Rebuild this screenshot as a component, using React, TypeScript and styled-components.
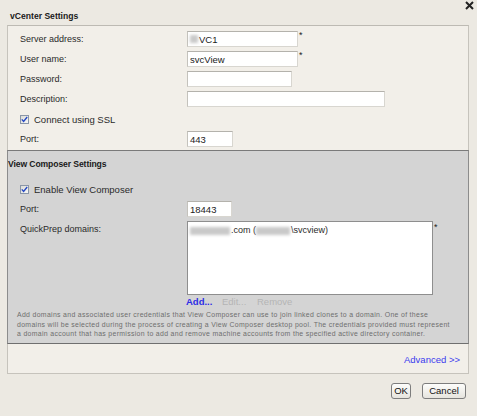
import styled, { createGlobalStyle } from "styled-components";

const GlobalStyle = createGlobalStyle`
  html, body {
    margin: 0;
    padding: 0;
    background: #ece9e2;
  }
  body {
    font-family: "Liberation Sans", Arial, sans-serif;
    font-size: 9px;
    color: #2a2a2a;
  }
`;

const Dialog = styled.div`
  width: 477px;
  height: 416px;
  display: flex;
  flex-direction: column;
  background: #ece9e2;
`;

const Header = styled.div`
  height: 25px;
  display: flex;
  justify-content: space-between;
  align-items: flex-start;
`;

const Title = styled.div`
  font-weight: bold;
  font-size: 8.6px;
  padding: 11px 0 0 10px;
  line-height: 10px;
  color: #1a1a1a;
`;

const Close = styled.div`
  width: 10px;
  height: 10px;
  margin: 1px 2px 0 0;
  display: flex;
`;

const Panel = styled.div`
  margin: 0 8px 0 7px;
  border: 1px solid #c6c3bc;
  border-top-color: #bdbab3;
  background: #f2efe9;
  display: flex;
  flex-direction: column;
`;

const Fields = styled.div`
  padding: 3px 0 1px 12px;
  display: flex;
  flex-direction: column;
`;

const Row = styled.div<{ $h?: number; $top?: boolean }>`
  display: flex;
  align-items: ${(p) => (p.$top ? "flex-start" : "center")};
  height: ${(p) => p.$h ?? 20}px;
`;

const Label = styled.div<{ $top?: boolean }>`
  width: 167px;
  flex: none;
  line-height: 12px;
  padding-top: ${(p) => (p.$top ? 4 : 0)}px;
`;

const Input = styled.div<{ $w: number }>`
  width: ${(p) => p.$w}px;
  height: 16px;
  box-sizing: border-box;
  background: #fff;
  border: 1px solid #d8d6d0;
  border-top-color: #b4b2ac;
  border-left-color: #c4c2bc;
  display: flex;
  align-items: center;
  padding-left: 2px;
  font-size: 9.5px;
  color: #222;
`;

const Req = styled.span<{ $top?: number }>`
  align-self: flex-start;
  font-size: 9px;
  line-height: 9px;
  margin: ${(p) => p.$top ?? 2}px 0 0 1px;
  color: #222;
`;

const Blur = styled.span<{ $w: number }>`
  display: inline-block;
  width: ${(p) => p.$w}px;
  height: 8px;
  background: #c9c9c9;
  filter: blur(1.4px);
  margin-right: 1px;
`;

const CheckRow = styled.div`
  display: flex;
  align-items: center;
  height: 20px;
  gap: 5px;
  font-size: 9.5px;
`;

const Box = styled.span`
  width: 9px;
  height: 9px;
  box-sizing: border-box;
  border: 1px solid #8a96a8;
  background: linear-gradient(135deg, #dcdcd6, #f8f8f6);
  display: flex;
  align-items: center;
  justify-content: center;
`;

const Gray = styled.div`
  margin: 0 -1px;
  background: #d4d4d4;
  border: 1px solid #8c8c8c;
  border-top-color: #7a7a7a;
  border-bottom-color: #6f6f6f;
  display: flex;
  flex-direction: column;
  padding-bottom: 4px;
`;

const SubTitle = styled.div`
  font-weight: bold;
  font-size: 8.6px;
  line-height: 14px;
  padding: 6px 0 8px 0;
  color: #1a1a1a;
  letter-spacing: -0.1px;
`;

const GrayFields = styled.div`
  padding-left: 12px;
  display: flex;
  flex-direction: column;
`;

const ListBox = styled.div`
  width: 246px;
  height: 74px;
  margin-top: 2px;
  box-sizing: border-box;
  background: #fff;
  border: 1px solid #8e8e8e;
  padding: 3px 2px;
  font-size: 9px;
  line-height: 11px;
  display: flex;
`;

const ListLine = styled.div`
  align-self: flex-start;
  display: flex;
  align-items: center;
`;

const Links = styled.div`
  display: flex;
  height: 12px;
  align-items: center;
  padding-left: 178px;
  font-size: 9.5px;
`;

const Link = styled.span<{ $on?: boolean; $w: number }>`
  width: ${(p) => p.$w}px;
  color: ${(p) => (p.$on ? "#2c2ce6" : "#b4b4b4")};
  font-weight: ${(p) => (p.$on ? 600 : 400)};
`;

const Help = styled.div`
  padding: 3px 0 0 9px;
  font-size: 6.9px;
  line-height: 9.5px;
  letter-spacing: 0.33px;
  color: #6e6e6e;
  white-space: nowrap;
`;

const AdvancedBar = styled.div`
  height: 29px;
  display: flex;
  align-items: center;
  justify-content: flex-end;
  padding: 2px 8px 0 0;
  box-sizing: border-box;
`;

const Advanced = styled.span`
  color: #3b3bef;
  font-size: 9.5px;
`;

const Footer = styled.div`
  display: flex;
  justify-content: flex-end;
  gap: 11px;
  padding: 9px 11px 0 0;
`;

const Button = styled.div<{ $w: number }>`
  width: ${(p) => p.$w}px;
  height: 16px;
  box-sizing: border-box;
  border: 1px solid #7d7d7d;
  border-radius: 3px;
  background: linear-gradient(#fdfdfb, #e6e4de);
  display: flex;
  align-items: center;
  justify-content: center;
  font-size: 9.5px;
  color: #111;
`;

const Check = () => (
  <Box>
    <svg width="7" height="7" viewBox="0 0 7 7">
      <path d="M0.8 3.4 L2.6 5.4 L6.2 1" stroke="#2447c4" strokeWidth="1.4" fill="none" />
    </svg>
  </Box>
);

export default function App() {
  return (
    <Dialog>
      <GlobalStyle />
      <Header>
        <Title>vCenter Settings</Title>
        <Close>
          <svg width="9" height="9" viewBox="0 0 9 9">
            <path d="M1 1 L8 8 M8 1 L1 8" stroke="#222" strokeWidth="2" />
          </svg>
        </Close>
      </Header>
      <Panel>
        <Fields>
          <Row>
            <Label>Server address:</Label>
            <Input $w={111}>
              <Blur $w={8} />VC1
            </Input>
            <Req>*</Req>
          </Row>
          <Row>
            <Label>User name:</Label>
            <Input $w={111}>svcView</Input>
            <Req>*</Req>
          </Row>
          <Row>
            <Label>Password:</Label>
            <Input $w={105} />
          </Row>
          <Row>
            <Label>Description:</Label>
            <Input $w={198} />
          </Row>
          <CheckRow>
            <Check />
            Connect using SSL
          </CheckRow>
          <Row>
            <Label>Port:</Label>
            <Input $w={46}>443</Input>
          </Row>
        </Fields>
        <Gray>
          <SubTitle>View Composer Settings</SubTitle>
          <GrayFields>
            <CheckRow>
              <Check />
              Enable View Composer
            </CheckRow>
            <Row>
              <Label>Port:</Label>
              <Input $w={45}>18443</Input>
            </Row>
            <Row $h={76} $top>
              <Label $top>QuickPrep domains:</Label>
              <ListBox>
                <ListLine>
                  <Blur $w={40} />.com (<Blur $w={34} />\svcview)
                </ListLine>
              </ListBox>
              <Req $top={4}>*</Req>
            </Row>
          </GrayFields>
          <Links>
            <Link $on $w={36}>Add...</Link>
            <Link $w={35}>Edit...</Link>
            <Link $w={40}>Remove</Link>
          </Links>
          <Help>
            Add domains and associated user credentials that View Composer can use to join linked clones to a domain. One of these
            <br />
            domains will be selected during the process of creating a View Composer desktop pool. The credentials provided must represent
            <br />
            a domain account that has permission to add and remove machine accounts from the specified active directory container.
          </Help>
        </Gray>
        <AdvancedBar>
          <Advanced>Advanced &gt;&gt;</Advanced>
        </AdvancedBar>
      </Panel>
      <Footer>
        <Button $w={20}>OK</Button>
        <Button $w={44}>Cancel</Button>
      </Footer>
    </Dialog>
  );
}
